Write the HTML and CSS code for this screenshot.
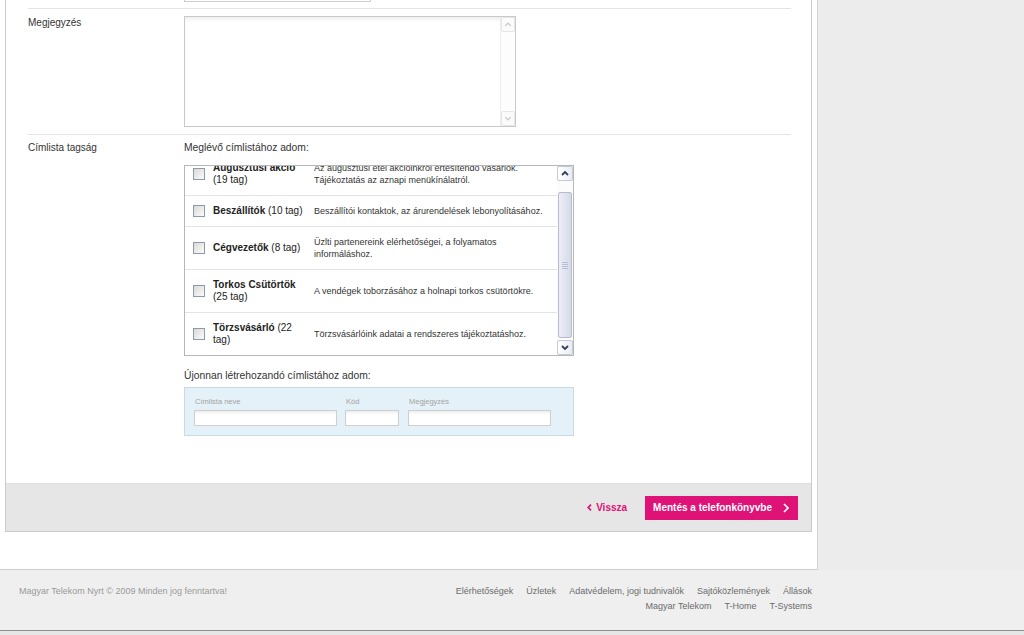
FILE: index.html
```html
<!DOCTYPE html>
<html lang="hu">
<head>
<meta charset="utf-8">
<title>Címlista tagság</title>
<link rel="stylesheet" href="styles.css">
</head>
<body>
<div class="page">
  <div class="card">
    <div class="form">
      <div class="row row-prev">
        <div class="label"></div>
        <div class="field"><div class="input input-prev"></div></div>
      </div>

      <div class="row">
        <div class="label">Megjegyzés</div>
        <div class="field">
          <div class="textarea">
            <textarea class="ta-input" aria-label="Megjegyzés"></textarea>
            <div class="sb sb-disabled">
              <div class="sb-btn"><svg width="13" height="13" viewBox="0 0 13 13"><path d="M3.5 8 L6.5 5 L9.5 8" fill="none" stroke="#c9c9c9" stroke-width="1.5"/></svg></div>
              <div class="sb-track"></div>
              <div class="sb-btn"><svg width="13" height="13" viewBox="0 0 13 13"><path d="M3.5 5 L6.5 8 L9.5 5" fill="none" stroke="#c9c9c9" stroke-width="1.5"/></svg></div>
            </div>
          </div>
        </div>
      </div>

      <div class="row row-lists">
        <div class="label">Címlista tagság</div>
        <div class="field">
          <div class="field-title">Meglévő címlistához adom:</div>
          <div class="listbox">
            <div class="listview">
              <div class="listscroll">
                <div class="item">
                  <span class="cb"></span>
                  <div class="name"><b>Augusztusi akció</b> (19 tag)</div>
                  <div class="desc">Az augusztusi étel akcióinkról értesítendő vásárlók. Tájékoztatás az aznapi menükínálatról.</div>
                </div>
                <div class="item">
                  <span class="cb"></span>
                  <div class="name"><b>Beszállítók</b> (10 tag)</div>
                  <div class="desc">Beszállítói kontaktok, az árurendelések lebonyolításához.</div>
                </div>
                <div class="item">
                  <span class="cb"></span>
                  <div class="name"><b>Cégvezetők</b> (8 tag)</div>
                  <div class="desc">Üzlti partenereink elérhetőségei, a folyamatos informáláshoz.</div>
                </div>
                <div class="item">
                  <span class="cb"></span>
                  <div class="name"><b>Torkos Csütörtök</b> (25 tag)</div>
                  <div class="desc">A vendégek toborzásához a holnapi torkos csütörtökre.</div>
                </div>
                <div class="item">
                  <span class="cb"></span>
                  <div class="name"><b>Törzsvásárló</b> (22 tag)</div>
                  <div class="desc">Törzsvásárlóink adatai a rendszeres tájékoztatáshoz.</div>
                </div>
              </div>
            </div>
            <div class="sb sb-active">
              <div class="sb-btn"><svg width="14" height="13" viewBox="0 0 14 13"><path d="M4 8 L7 5 L10 8" fill="none" stroke="#2f3f5c" stroke-width="1.8"/></svg></div>
              <div class="sb-track">
                <div class="sb-thumb"><span></span><span></span><span></span><span></span></div>
              </div>
              <div class="sb-btn"><svg width="14" height="13" viewBox="0 0 14 13"><path d="M4 5 L7 8 L10 5" fill="none" stroke="#2f3f5c" stroke-width="1.8"/></svg></div>
            </div>
          </div>

          <div class="field-title new-title">Újonnan létrehozandó címlistához adom:</div>
          <div class="newlist">
            <div class="nl-col nl-wide">
              <div class="nl-label">Címlista neve</div>
              <div class="input nl-input"></div>
            </div>
            <div class="nl-col nl-code">
              <div class="nl-label">Kód</div>
              <div class="input nl-input"></div>
            </div>
            <div class="nl-col nl-wide">
              <div class="nl-label">Megjegyzés</div>
              <div class="input nl-input"></div>
            </div>
          </div>
        </div>
      </div>
    </div>

    <div class="actions">
      <a class="back" href="#"><svg width="5" height="7" viewBox="0 0 5 7"><path d="M4 0.6 L1.2 3.5 L4 6.4" fill="none" stroke="#de1277" stroke-width="1.7"/></svg>Vissza</a>
      <button class="save" type="button">Mentés a telefonkönyvbe<svg width="6" height="10" viewBox="0 0 6 10"><path d="M1 1 L5 5 L1 9" fill="none" stroke="#fff" stroke-width="1.6"/></svg></button>
    </div>
  </div>
</div>

<footer class="footer">
  <div class="footer-inner">
    <div class="copy">Magyar Telekom Nyrt © 2009 Minden jog fenntartva!</div>
    <div class="links">
      <div class="links-row"><a href="#">Elérhetőségek</a><a href="#">Üzletek</a><a href="#">Adatvédelem, jogi tudnivalók</a><a href="#">Sajtóközlemények</a><a href="#">Állások</a></div>
      <div class="links-row"><a href="#">Magyar Telekom</a><a href="#">T-Home</a><a href="#">T-Systems</a></div>
    </div>
  </div>
</footer>
<div class="statusbar"></div>
</body>
</html>
```

FILE: styles.css
```css
* { box-sizing: border-box; }
html, body { margin: 0; padding: 0; }
body {
  width: 1024px;
  height: 635px;
  overflow: hidden;
  background: #ececec;
  font-family: "Liberation Sans", Arial, sans-serif;
  font-size: 10px;
  color: #333;
}

.page {
  width: 818px;
  padding: 0 5px 37px;
  background: #fff;
  border-right: 1px solid #d4d4d4;
  border-bottom: 1px solid #cdcdcd;
  display: flow-root;
}

.card {
  margin-top: -28px;
  background: #fff;
  border: 1px solid #cbcbcb;
  border-top: 0;
}

.form { margin: 0 20px 0 22px; }

.row {
  display: grid;
  grid-template-columns: 156px 1fr;
  border-top: 1px solid #e4e4e4;
  padding: 7px 0;
}
.row-prev { border-top: 0; padding: 8px 0 6px; }
.row-lists { padding: 6px 0 47px; }

.label { line-height: 13px; color: #333; }

.input {
  background: #fff;
  border: 1px solid #cdcdcd;
  box-shadow: inset 0 3px 3px -1px rgba(0, 0, 0, 0.07);
}
.input-prev { width: 187px; height: 22px; }

/* textarea */
.textarea {
  width: 332px;
  height: 111px;
  border: 1px solid #c9c9c9;
  display: flex;
  background: #fff;
  box-shadow: inset 0 4px 4px -2px rgba(0, 0, 0, 0.08);
}
.ta-input {
  flex: 1;
  border: 0;
  resize: none;
  background: transparent;
  outline: none;
  margin: 0;
  padding: 2px;
}

/* scrollbars */
.sb { display: flex; flex-direction: column; flex: none; }
.sb-disabled { width: 15px; border-left: 1px solid #ededed; }
.sb-disabled .sb-btn {
  height: 15px;
  border: 1px solid #e6e6e6;
  border-radius: 2px;
  background: #fbfbfb;
  display: flex;
  align-items: center;
  justify-content: center;
}
.sb-disabled .sb-track { flex: 1; background: #fdfdfd; }

.sb-active { width: 16px; background: #f7f7f9; }
.sb-active .sb-btn {
  height: 15px;
  border: 1px solid #c2c9d9;
  border-radius: 2px;
  background: linear-gradient(to right, #ffffff, #e9ecf4);
  display: flex;
  align-items: center;
  justify-content: center;
}
.sb-active .sb-track { flex: 1; background: #fcfcfd; padding-top: 11px; }
.sb-thumb {
  height: 146px;
  margin: 0 1px;
  border: 1px solid #b5bcd2;
  border-radius: 2px;
  background: linear-gradient(to right, #eceef6, #d6dae8);
  display: flex;
  flex-direction: column;
  align-items: center;
  justify-content: center;
  gap: 1px;
}
.sb-thumb span { width: 6px; height: 1px; background: #b9bfd3; }

/* field titles */
.field-title { line-height: 13px; font-size: 10.3px; color: #333; }
.new-title { margin-top: 13px; }

/* list box */
.listbox {
  margin-top: 11px;
  width: 390px;
  height: 191px;
  border: 1px solid #b7b7b7;
  display: flex;
}
.listview { width: 372px; overflow: hidden; }
.listscroll { margin-top: -13px; }
.item {
  display: flex;
  align-items: center;
  padding: 9px 0;
  border-bottom: 1px solid #e3e3e3;
  line-height: 12px;
}
.item:last-child { border-bottom: 0; }
.cb {
  flex: none;
  width: 12px;
  height: 12px;
  margin: 0 8px;
  border: 1px solid #8c9aab;
  background: linear-gradient(135deg, #d9d9d3 0%, #ececea 55%, #fbfbfb 100%);
}
.name { width: 93px; margin-right: 8px; font-size: 10px; color: #222; }
.name b { font-weight: bold; }
.desc { width: 238px; font-size: 9px; color: #333; }

/* new list */
.newlist {
  margin-top: 5px;
  width: 390px;
  height: 49px;
  border: 1px solid #c7dbe7;
  background: #e5f1f8;
  padding: 8px 9px 0;
  display: flex;
}
.nl-col { display: flex; flex-direction: column; }
.nl-wide { width: 143px; }
.nl-code { width: 54px; margin: 0 9px 0 8px; }
.nl-label { font-size: 7.5px; line-height: 11px; color: #a3a3a3; margin: 0 0 3px 1px; }
.nl-input { height: 16px; border-color: #cfcfcf; }

/* actions */
.actions {
  height: 48px;
  border-top: 1px solid #e0e0e0;
  background: #e6e6e6;
  display: flex;
  align-items: center;
  justify-content: flex-end;
  padding-right: 13px;
}
.back {
  display: flex;
  align-items: center;
  gap: 4px;
  color: #de1277;
  font-weight: bold;
  font-size: 10px;
  text-decoration: none;
  margin-right: 18px;
}
.save {
  display: flex;
  align-items: center;
  height: 24px;
  padding: 0 9px 0 8px;
  border: 0;
  background: #de1277;
  color: #fff;
  font-family: inherit;
  font-weight: bold;
  font-size: 10px;
}
.save svg { margin-left: 11px; }

/* footer */
.footer {
  height: 61px;
  background: #efefef;
  border-bottom: 1px solid #8d8d8d;
  font-size: 9px;
  line-height: 15px;
}
.footer-inner {
  width: 818px;
  display: flex;
  justify-content: space-between;
  padding: 14px 6px 0 19px;
}
.copy { color: #9a9a9a; }
.links { text-align: right; }
.links a { color: #6b6b6b; text-decoration: none; margin-left: 13px; }

.statusbar { height: 4px; background: #e6e6e6; }
```
